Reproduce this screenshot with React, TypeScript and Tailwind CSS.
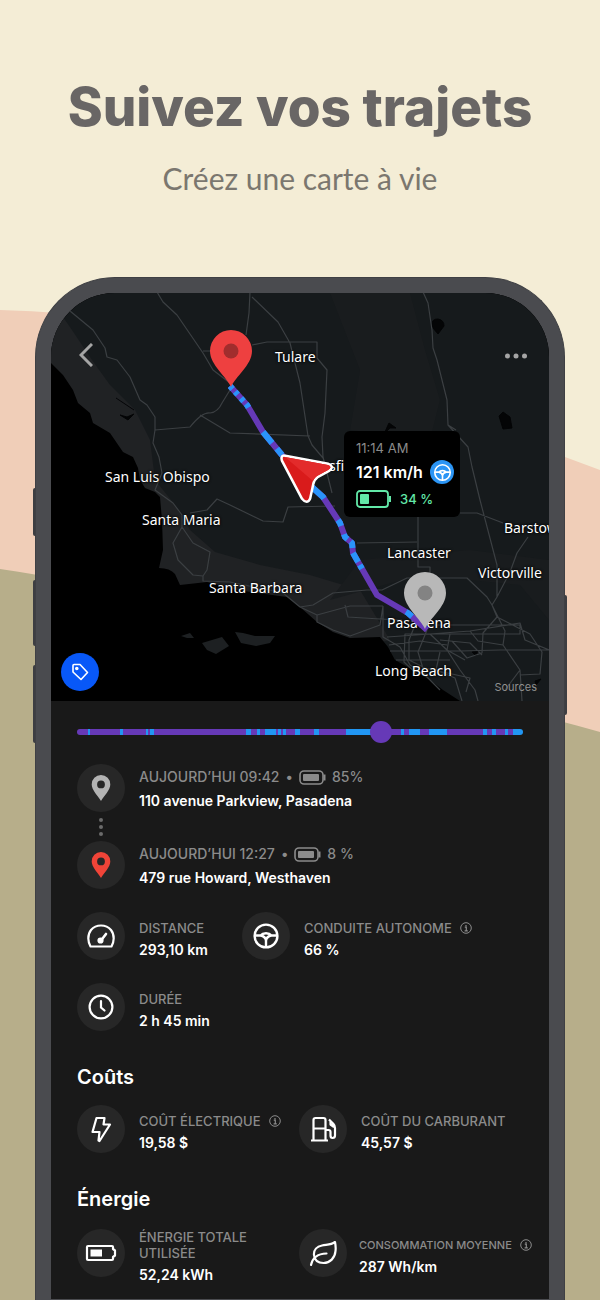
import type { ReactNode } from "react";
import clsx from "clsx";

const PURPLE = "#6639b7";
const BLUE = "#2196f3";

// autopilot stretches along the trip, in percent of its length
const autopilot = [
  [2.4, 2.9], [9.6, 10.3], [15.4, 15.9], [16.3, 17.3], [37.9, 39], [40.3, 41],
  [42.1, 44.6], [45.1, 45.7], [46.2, 46.9], [48.9, 50], [53.1, 54.3],
  [60.3, 66.5], [72.6, 73.3], [74.4, 76.9], [78.9, 83], [91, 92], [93, 94],
  [96, 96.6], [97.8, 100],
];

const trackGradient = `linear-gradient(to right, ${autopilot
  .map(([from, to]) => `${PURPLE} ${from}%, ${BLUE} ${from}% ${to}%, ${PURPLE} ${to}%`)
  .join(", ")})`;

const cities = [
  { name: "Tulare", place: "left-[224px] top-[54px]" },
  { name: "San Luis Obispo", place: "left-[54px] top-[174px]" },
  { name: "Santa Maria", place: "left-[91px] top-[217px]" },
  { name: "Santa Barbara", place: "left-[158px] top-[285px]" },
  { name: "Bakersfield", place: "left-[240px] top-[163px]" },
  { name: "Lancaster", place: "left-[336px] top-[250px]" },
  { name: "Barstow", place: "left-[453px] top-[225px]" },
  { name: "Victorville", place: "left-[427px] top-[270px]" },
  { name: "Pasadena", place: "left-[336px] top-[320px]" },
  { name: "Long Beach", place: "left-[324px] top-[368px]" },
];

const roads = [
  "M70 311L93 330L105 348L107 357L117 360L130 377L140 400L147 405L155 417V430L153 443L159 457L162 473L155 490L173 503L182 515V527L173 543L178 560L193 575L203 576V581L230 582L283 593L300 607",
  "M182 527L193 543L210 552L207 570L203 576",
  "M190 513L207 510L217 499L230 505L263 521L283 522L288 507L335 506",
  "M157 292L163 302L177 315L203 353L213 370L230 383",
  "M203 351H212",
  "M250 292L249 313L246 335",
  "M252 297L278 322L290 343L300 383L308 436L312 445L323 458",
  "M252 345L267 342H317V358L327 370L325 413L322 437L323 457L332 493",
  "M230 390L222 403Q218 412 210 413Q202 412 190 427L155 430",
  "M200 415L230 433L310 436",
  "M423 292L428 303L432 330L433 348L437 360L447 400L448 425L468 447L472 467L480 500L497 565V597L492 605",
  "M448 425L456 430",
  "M460 513H477L503 523",
  "M528 537L517 553L510 572L497 597",
  "M418 510V567H430V576",
  "M357 543L417 542",
  "M300 607L313 605L333 593L367 590H382L407 578H467L487 597L492 605L497 617L483 633L482 653L467 658L452 641",
  "M300 607L317 615L350 606H383M317 615L317 622L333 630L350 636L380 625L383 606",
  "M345 605L348 617L380 619L402 620M383 606V637L400 647L410 665L427 676",
  "M387 637L430 634L470 631L520 623L525 640L549 650H500L460 651H390",
  "M420 625H520V634H405L404 662L418 675",
  "M415 625L409 640V660L425 668M427 630L418 652L425 675L440 690",
  "M430 634L447 650L460 670L475 690L478 701M440 652L436 670L455 678L462 701",
  "M450 634L447 650L465 660M492 605L505 631L503 645L520 670L522 701",
  "M497 617L530 634L542 652L540 674L520 675M440 640L470 643L482 655",
  "M389 645L420 641L447 645M396 660H450M520 670L505 690M425 668L470 678L466 692",
  "M470 631L478 641L503 645",
];

const Pin = ({ x, y, fill, hole }: { x: number; y: number; fill: string; hole: string }) => (
  <g transform={`translate(${x} ${y})`}>
    <path d="M0 0C-4-10-21-22-21-36A21 21 0 0 1 21-36C21-22 4-10 0 0Z" fill={fill} />
    <circle cy="-36" r="7.5" fill={hole} />
  </g>
);

const MapDrawing = () => (
  <svg
    viewBox="51 293 498 408"
    preserveAspectRatio="xMidYMid slice"
    className="h-full w-full"
    aria-hidden="true"
  >
    <rect x="51" y="293" width="498" height="408" fill="#161a1c" />
    <path
      d="M51 300L72 330L92 360L110 385L135 410L150 440L155 480L175 505L190 530L215 552L260 565L310 575L360 590L390 640L300 660L51 560Z"
      fill="#202224"
    />
    <path d="M330 293L410 293L425 350L440 400L430 440L350 430L360 370Z" fill="#191c1e" />
    <path d="M330 600L420 575L520 585L549 620V560L470 550L360 560Z" fill="#191c1e" />
    <path
      d="M51 363L63 375L73 390L78 403L90 413L93 423L110 433L123 452L133 457L138 468L140 480L145 488L155 492L160 497L162 520L163 550L159 568Q170 568 175 574L180 585L207 582L237 590L287 597L300 607L317 622L333 632L350 638L380 637L388 647L395 660L413 670L430 680L443 690L460 701H51Z"
      fill="#000"
    />
    <path
      d="M181 636L190 633L194 638L187 638ZM202 643L212 640L222 637L229 646L216 654L207 650ZM235 632L243 633L255 636L275 636L270 643L256 646L241 643Z"
      fill="#1d2022"
    />
    <path
      d="M116 398L134 410M120 415L127 417L134 414L128 420ZM384 434L389 423L396 428L390 428ZM432 324Q432 319 438 319Q444 320 444 326L438 334L433 328ZM499 416L503 412L510 417L512 428L503 429ZM472 652L478 650L476 656ZM535 681L541 679L536 685Z"
      fill="#040506"
      stroke="#040506"
    />
    <path d={roads.join("")} fill="none" stroke="#3b3f42" strokeWidth="1.2" strokeLinejoin="round" />
  </svg>
);

const RouteDrawing = () => (
  <svg
    viewBox="51 293 498 408"
    preserveAspectRatio="xMidYMid slice"
    className="absolute inset-0 h-full w-full"
    aria-hidden="true"
  >
    <g fill="none" strokeWidth="6" strokeLinejoin="round">
      <path
        d="M230 386L247 405L263 432L282 455L313 488L323 497L340 523L345 537L352 543L353 553L377 595L408 613L427 630"
        stroke={PURPLE}
      />
      <path
        d="M230 386L232.600 388.900M235.100 391.700L237.700 394.600M241 398.300L243.600 401.200M246 403.900L247 405L248.500 407.500M263 432L272.100 443M276.800 448.700L282 455M303 477.400L313 488L323 497L324 498.500M338 520L340 523L341 526M344 534.200L345 537L347.500 539.100M350.500 541.700L352 543L352.500 548M353 553L358.100 562M359.800 565L362 568.800M406 611.800L408 613L412 616.600"
        stroke="#2a94fb"
      />
    </g>
    <Pin x={231} y={387} fill="#ee4040" hole="#a12d2d" />
    <Pin x={425} y={629} fill="#b8b8b8" hole="#838383" />
    <path
      d="M285 457L328 465Q333 467 328 470L317 476Q313 479 312 484L309 498Q307 503 303 498L283 460Q282 456 285 457Z"
      fill="#d91b1b"
      stroke="#fff"
      strokeWidth="5"
      strokeLinejoin="round"
    />
    <path
      d="M285 457L328 465Q333 467 328 470L317 476Q313 479 312 484L309 498Q307 503 303 498L283 460Q282 456 285 457Z"
      fill="#d91b1b"
    />
    <path d="M285 457L328 465Q333 467 328 470L317 476Q314 478 313 481Z" fill="#e32b2b" />
  </svg>
);

type IconProps = { className?: string };

const Wheel = ({ className }: IconProps) => (
  <svg viewBox="0 0 28 28" className={className} fill="none" stroke="currentColor" strokeWidth="2.4" aria-hidden="true">
    <circle cx="14" cy="14" r="11.4" />
    <path d="M3 13.500H8.500C11 10.500 17 10.500 19.500 13.500H25M8.500 13.500Q13.500 14.500 14 18.500V25M19.500 13.500Q14.500 14.500 14 18.500" />
  </svg>
);

const Speedometer = () => (
  <svg viewBox="0 0 28 28" className="size-7" fill="none" stroke="currentColor" strokeWidth="2.2" strokeLinecap="round" strokeLinejoin="round" aria-hidden="true">
    <path d="M3.500 24.500H24.500C27 20 28 13 24 8C19 2 9 2 4 8C0 13 1 20 3.500 24.500Z" />
    <path d="M14 18.500L19 12" strokeWidth="2.600" />
    <circle cx="13.500" cy="18.500" r="2" fill="currentColor" />
  </svg>
);

const Clock = () => (
  <svg viewBox="0 0 28 28" className="size-7" fill="none" stroke="currentColor" strokeWidth="2.2" strokeLinecap="round" aria-hidden="true">
    <circle cx="14" cy="14" r="11.4" />
    <path d="M14 8V14.500L17.500 17.500" />
  </svg>
);

const Bolt = () => (
  <svg viewBox="0 0 28 28" className="size-7" fill="none" stroke="currentColor" strokeWidth="2.2" strokeLinejoin="round" aria-hidden="true">
    <path d="M9.500 3H17.500L16.500 9.500H23L12.500 26L11.500 25.500L12.500 17H5.500Z" />
  </svg>
);

const Pump = () => (
  <svg viewBox="0 0 28 28" className="size-7" fill="none" stroke="currentColor" strokeWidth="2.2" strokeLinejoin="round" aria-hidden="true">
    <path d="M4.500 25V5Q4.500 3 6.500 3H14.500Q16.500 3 16.500 5V25M2 25.500H19M4.500 13.500H16.500" />
    <path d="M20 4.500L24.500 9Q26 10.500 26 13V20.500Q26 23 23.500 23Q21.500 23 21.500 20.500V17Q21.500 15 19.500 15H17M21.500 6V9.500L25 12" />
  </svg>
);

const Leaf = () => (
  <svg viewBox="0 0 28 28" className="size-7" fill="none" stroke="currentColor" strokeWidth="2.2" strokeLinecap="round" strokeLinejoin="round" aria-hidden="true">
    <path d="M26 3C22 6 18 5.500 13 6.500C8 7.500 4.500 11 5 16C5.500 21 9 24 14.500 24C21 24 26 19 26.500 12C27 8.500 26.500 5.500 26 3Z" />
    <path d="M2 26C3 20 8 14.500 17.500 14.500" />
  </svg>
);

const BatteryHalf = () => (
  <svg viewBox="0 0 32 18" className="h-[18px] w-8" fill="none" stroke="currentColor" strokeWidth="2.2" strokeLinejoin="round" aria-hidden="true">
    <path d="M3 2H27Q28 2 28 3V5L30 6.500V11.500L28 13V15Q28 16 27 16H3Q2 16 2 15V3Q2 2 3 2Z" />
    <path d="M5.500 5.500H17V12.500H5.500Z" fill="currentColor" stroke="none" />
  </svg>
);

const BatteryFull = () => (
  <svg viewBox="0 0 27 15" className="h-[15px] w-[27px]" fill="none" aria-hidden="true">
    <rect x="1" y="1" width="23" height="13" rx="4" stroke="currentColor" strokeWidth="1.600" />
    <rect x="4" y="4" width="16" height="7" rx="1" fill="currentColor" />
    <path d="M25.500 4.500V10.500" stroke="currentColor" strokeWidth="2" />
  </svg>
);

const PlaceMarker = ({ className }: IconProps) => (
  <svg viewBox="0 0 20 28" className={clsx("h-7 w-5", className)} fill="currentColor" aria-hidden="true">
    <path fillRule="evenodd" d="M10 1A9.300 9.300 0 0 1 19.300 10.500C19.300 16 13 22 10 27C7 22 .7 16 .7 10.500A9.300 9.300 0 0 1 10 1ZM10 6.500A3.900 3.900 0 1 0 10 14.300A3.900 3.900 0 1 0 10 6.500Z" />
  </svg>
);

const InfoButton = ({ label }: { label: string }) => (
  <button type="button" aria-label={label} className="shrink-0">
    <svg viewBox="0 0 12 12" className="size-3" fill="none" stroke="currentColor" aria-hidden="true">
      <circle cx="6" cy="6" r="5.300" />
      <path d="M4.800 5.200H6.300V8.800M4.600 8.800H7.800M6 3V4.200" strokeWidth="1.200" />
    </svg>
  </button>
);

const IconDisc = ({ children }: { children: ReactNode }) => (
  <div className="flex size-12 shrink-0 items-center justify-center rounded-full bg-[#272727] text-white">
    {children}
  </div>
);

type StatProps = {
  icon: ReactNode;
  label: string;
  value: string;
  info?: boolean;
  small?: boolean;
  twoLines?: boolean;
};

const Stat = ({ icon, label, value, info, small, twoLines }: StatProps) => (
  <div className={clsx("flex items-start", small ? "gap-3" : "gap-3.5")}>
    <IconDisc>{icon}</IconDisc>
    <dl className={clsx(!twoLines && "pt-2")}>
      <dt
        className={clsx(
          "flex items-center gap-2 leading-4 font-medium text-[#8b8b8b]",
          small ? "text-[11px]" : "text-[13px]",
        )}
      >
        <span className={clsx(!twoLines && "whitespace-nowrap")}>{label}</span>
        {info && <InfoButton label={`À propos : ${label}`} />}
      </dt>
      <dd className="mt-0.5 text-sm leading-6 font-semibold text-white">{value}</dd>
    </dl>
  </div>
);

type StopProps = { time: string; battery: string; address: string; marker: string };

const Stop = ({ time, battery, address, marker }: StopProps) => (
  <li className="flex items-center gap-3.5">
    <IconDisc>
      <PlaceMarker className={marker} />
    </IconDisc>
    <div className="pt-0.5">
      <p className="flex items-center gap-1.5 text-sm leading-6 font-medium text-[#8b8b8b]">
        <span>{time}</span>
        <span>•</span>
        <BatteryFull />
        <span>{battery}</span>
      </p>
      <p className="text-sm leading-6 font-semibold text-white">{address}</p>
    </div>
  </li>
);

const Backdrop = () => (
  <svg
    viewBox="0 0 600 1300"
    preserveAspectRatio="none"
    className="absolute inset-0 h-full w-full"
    aria-hidden="true"
  >
    <path d="M0 310C100 312 200 330 300 362C400 400 480 430 565 457L600 470V1300H0Z" fill="#f0ceb8" />
    <path d="M0 569C150 590 300 650 400 680C480 702 540 715 600 732V1300H0Z" fill="#b7ae8a" />
  </svg>
);

const TripMap = () => (
  <section
    aria-label="Carte du trajet"
    className="relative h-[408px] overflow-hidden rounded-t-[64px] bg-black"
  >
    <MapDrawing />
    {cities.map((city) => (
      <span
        key={city.name}
        className={clsx(
          "absolute font-['Noto_Sans'] text-sm leading-5 whitespace-nowrap text-white [text-shadow:0_0_2px_#000,0_0_3px_#000]",
          city.place,
        )}
      >
        {city.name}
      </span>
    ))}
    <RouteDrawing />

    <button type="button" aria-label="Retour" className="absolute top-[50px] left-7 text-[#a5a5a5]">
      <svg viewBox="0 0 14 24" className="h-6 w-3.5" fill="none" stroke="currentColor" strokeWidth="3" aria-hidden="true">
        <path d="M13 1L2 12L13 23" />
      </svg>
    </button>
    <button type="button" aria-label="Plus d’options" className="absolute top-[60px] right-[22px] text-[#a5a5a5]">
      <svg viewBox="0 0 22 6" className="h-1.5 w-[22px]" fill="currentColor" aria-hidden="true">
        <circle cx="2.500" cy="3" r="2.500" />
        <circle cx="11" cy="3" r="2.500" />
        <circle cx="19.500" cy="3" r="2.500" />
      </svg>
    </button>

    <div className="absolute top-[138px] left-[293px] h-[86px] w-[116px] rounded-md bg-black px-3 pt-2">
      <p className="text-[13px] leading-[18px] text-[#8b8b8b]">11:14 AM</p>
      <p className="flex items-center justify-between text-base leading-[30px] font-semibold whitespace-nowrap text-white">
        121 km/h
        <span className="-mr-1.5 flex size-6 shrink-0 items-center justify-center rounded-full bg-[#2b95f5]">
          <Wheel className="size-[19px]" />
        </span>
      </p>
      <p className="flex items-center gap-2 text-[13px] leading-6 font-medium text-[#62e8a8]">
        <svg viewBox="0 0 36 18" className="h-[18px] w-9" fill="none" aria-hidden="true">
          <rect x="1" y="1" width="31" height="16" rx="3" stroke="currentColor" strokeWidth="1.800" />
          <rect x="4" y="4" width="9" height="10" rx="1" fill="currentColor" />
          <path d="M34 6V12" stroke="currentColor" strokeWidth="2" />
        </svg>
        34 %
      </p>
    </div>

    <button
      type="button"
      aria-label="Étiquette"
      className="absolute bottom-2.5 left-2.5 flex size-[38px] items-center justify-center rounded-full bg-[#0858f8] text-white"
    >
      <svg viewBox="0 0 18 18" className="size-[18px]" fill="none" stroke="currentColor" strokeWidth="1.600" strokeLinejoin="round" aria-hidden="true">
        <path d="M2 2.500Q2 1.500 3 1.500H9L16.500 9.500L10 16.500L2 9Z" />
        <circle cx="5.800" cy="5.500" r="1" fill="currentColor" />
      </svg>
    </button>
    <a href="#sources" className="absolute right-3 bottom-1.5 text-[11px] leading-4 text-[#8f8f8f]">
      Sources
    </a>
  </section>
);

export default function App() {
  return (
    <main className="relative flex min-h-screen flex-col overflow-hidden bg-[#f4edd6] font-['Inter',sans-serif]">
      <Backdrop />

      <header className="relative pt-[72px] text-center">
        <h1 className="text-[53px] leading-[70px] font-extrabold text-[#696665]">
          Suivez vos trajets
        </h1>
        <p className="mt-4 font-['Lato',sans-serif] text-[30px] leading-10 text-[#7b776f]">
          Créez une carte à vie
        </p>
      </header>

      <div className="relative mx-[35px] mt-[79px] flex-1 rounded-t-[80px] border-x border-t border-[#3f4044] bg-[#4a4b4f] px-[15px] pt-[15px]">
        <span className="absolute top-[210px] -left-[3px] h-12 w-0.5 rounded-l bg-[#3d3e42]" />
        <span className="absolute top-[302px] -left-[3px] h-[66px] w-0.5 rounded-l bg-[#3d3e42]" />
        <span className="absolute top-[387px] -left-[3px] h-[78px] w-0.5 rounded-l bg-[#3d3e42]" />
        <span className="absolute top-[317px] -right-[3px] h-[120px] w-0.5 rounded-r bg-[#3d3e42]" />

        <div className="h-full rounded-t-[64px] bg-[#191919]">
          <TripMap />

          <div className="px-[26px] pb-3">
            <div className="mt-5 flex h-[22px] items-center">
              <input
                type="range"
                aria-label="Position sur le trajet"
                defaultValue={69}
                style={{ background: trackGradient }}
                className="h-1.5 w-full appearance-none rounded-full [&::-webkit-slider-thumb]:size-[22px] [&::-webkit-slider-thumb]:appearance-none [&::-webkit-slider-thumb]:rounded-full [&::-webkit-slider-thumb]:bg-[#6639b7]"
              />
            </div>

            <ol className="mt-5">
              <Stop
                time="AUJOURD’HUI 09:42"
                battery="85%"
                address="110 avenue Parkview, Pasadena"
                marker="text-[#b3b3b3]"
              />
              <li aria-hidden="true" className="flex h-[27px] w-12 flex-col items-center justify-center gap-[3px]">
                <span className="size-1 rounded-full bg-[#6b6b6b]" />
                <span className="size-1 rounded-full bg-[#6b6b6b]" />
                <span className="size-1 rounded-full bg-[#6b6b6b]" />
              </li>
              <Stop
                time="AUJOURD’HUI 12:27"
                battery="8 %"
                address="479 rue Howard, Westhaven"
                marker="text-[#f04438]"
              />
            </ol>

            <div className="mt-[22px] grid grid-cols-[165px_1fr] gap-y-[21px]">
              <Stat icon={<Speedometer />} label="DISTANCE" value="293,10 km" />
              <Stat icon={<Wheel className="size-7" />} label="CONDUITE AUTONOME" value="66 %" info />
              <Stat icon={<Clock />} label="DURÉE" value="2 h 45 min" />
            </div>

            <h2 className="mt-[30px] text-xl leading-7 font-semibold text-white">Coûts</h2>
            <div className="mt-3.5 grid grid-cols-[222px_1fr]">
              <Stat icon={<Bolt />} label="COÛT ÉLECTRIQUE" value="19,58 $" info />
              <Stat icon={<Pump />} label="COÛT DU CARBURANT" value="45,57 $" />
            </div>

            <h2 className="mt-[30px] text-xl leading-7 font-semibold text-white">Énergie</h2>
            <div className="mt-4 grid grid-cols-[222px_1fr]">
              <Stat icon={<BatteryHalf />} label="ÉNERGIE TOTALE UTILISÉE" value="52,24 kWh" twoLines />
              <Stat icon={<Leaf />} label="CONSOMMATION MOYENNE" value="287 Wh/km" info small />
            </div>
          </div>
        </div>
      </div>
    </main>
  );
}
